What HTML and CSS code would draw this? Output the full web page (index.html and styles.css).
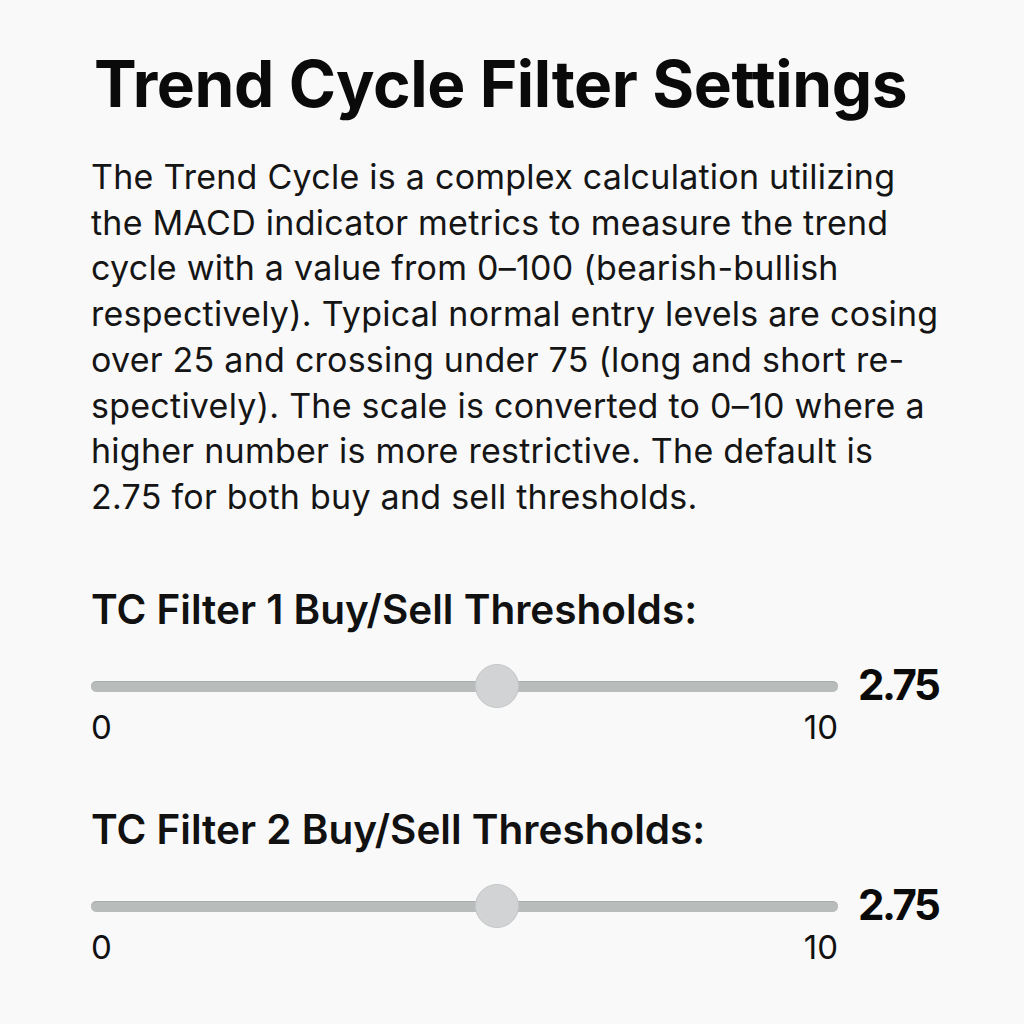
FILE: index.html
```html
<!DOCTYPE html>
<html lang="en">
<head>
<meta charset="utf-8">
<title>Trend Cycle Filter Settings</title>
<link rel="stylesheet" href="styles.css">
</head>
<body>
<main class="page">
  <h1 class="title">Trend Cycle Filter Settings</h1>
  <p class="desc">The Trend Cycle is a complex calculation utilizing<br>the MACD indicator metrics to measure the trend<br>cycle with a value from 0–100 (bearish-bullish<br>respectively). Typical normal entry levels are cosing<br>over 25 and crossing under 75 (long and short re-<br>spectively). The scale is converted to 0–10 where a<br>higher number is more restrictive. The default is<br>2.75 for both buy and sell thresholds.</p>

  <section class="filter">
    <h2 class="label">TC Filter 1 Buy/Sell Thresholds:</h2>
    <div class="slider">
      <div class="slider-main">
        <div class="track"><div class="thumb" style="left:54.35%"></div></div>
        <div class="ticks"><span>0</span><span>10</span></div>
      </div>
      <div class="value">2.75</div>
    </div>
  </section>

  <section class="filter">
    <h2 class="label">TC Filter 2 Buy/Sell Thresholds:</h2>
    <div class="slider">
      <div class="slider-main">
        <div class="track"><div class="thumb" style="left:54.35%"></div></div>
        <div class="ticks"><span>0</span><span>10</span></div>
      </div>
      <div class="value">2.75</div>
    </div>
  </section>
</main>
</body>
</html>
```
FILE: styles.css
```css
html, body {
  margin: 0;
  padding: 0;
  background: #f9f9f9;
}
body {
  font-family: Inter, "Noto Sans", "Liberation Sans", sans-serif;
  color: #111;
}
.page {
  padding: 44px 0 0 91px;
  width: 900px;
}
.title {
  margin: 0 0 0 3px;
  font-size: 64px;
  font-weight: 700;
  line-height: 80px;
  letter-spacing: -0.4px;
  color: #0a0a0a;
}
.desc {
  margin: 30px 0 0 0;
  font-size: 34px;
  line-height: 45.7px;
  font-weight: 400;
  letter-spacing: 0.25px;
  color: #151515;
}
.filter {
  margin-top: 67px;
}
.filter + .filter {
  margin-top: 61px;
}
.label {
  margin: 0;
  font-size: 40.5px;
  font-weight: 600;
  line-height: 46px;
  letter-spacing: 0;
  color: #111;
}
.slider {
  display: flex;
  align-items: flex-start;
  gap: 20px;
  margin-top: 26px;
}
.slider-main {
  width: 747px;
}
.track {
  position: relative;
  height: 11px;
  margin-top: 22px;
  border-radius: 6px;
  background: #b8bcbb;
  box-shadow: inset 0 1px 0 #a9adad;
}
.thumb {
  position: absolute;
  top: 50%;
  width: 44px;
  height: 44px;
  margin: -22px 0 0 -22px;
  border-radius: 50%;
  background: #d2d3d5;
  border: 1px solid #c4c6c7;
  box-sizing: border-box;
}
.ticks {
  display: flex;
  justify-content: space-between;
  margin-top: 16px;
  font-size: 33px;
  line-height: 38px;
  color: #111;
}
.value {
  font-size: 42px;
  font-weight: 700;
  line-height: 46px;
  margin-top: 3px;
  letter-spacing: -2.5px;
  color: #0a0a0a;
}
```
